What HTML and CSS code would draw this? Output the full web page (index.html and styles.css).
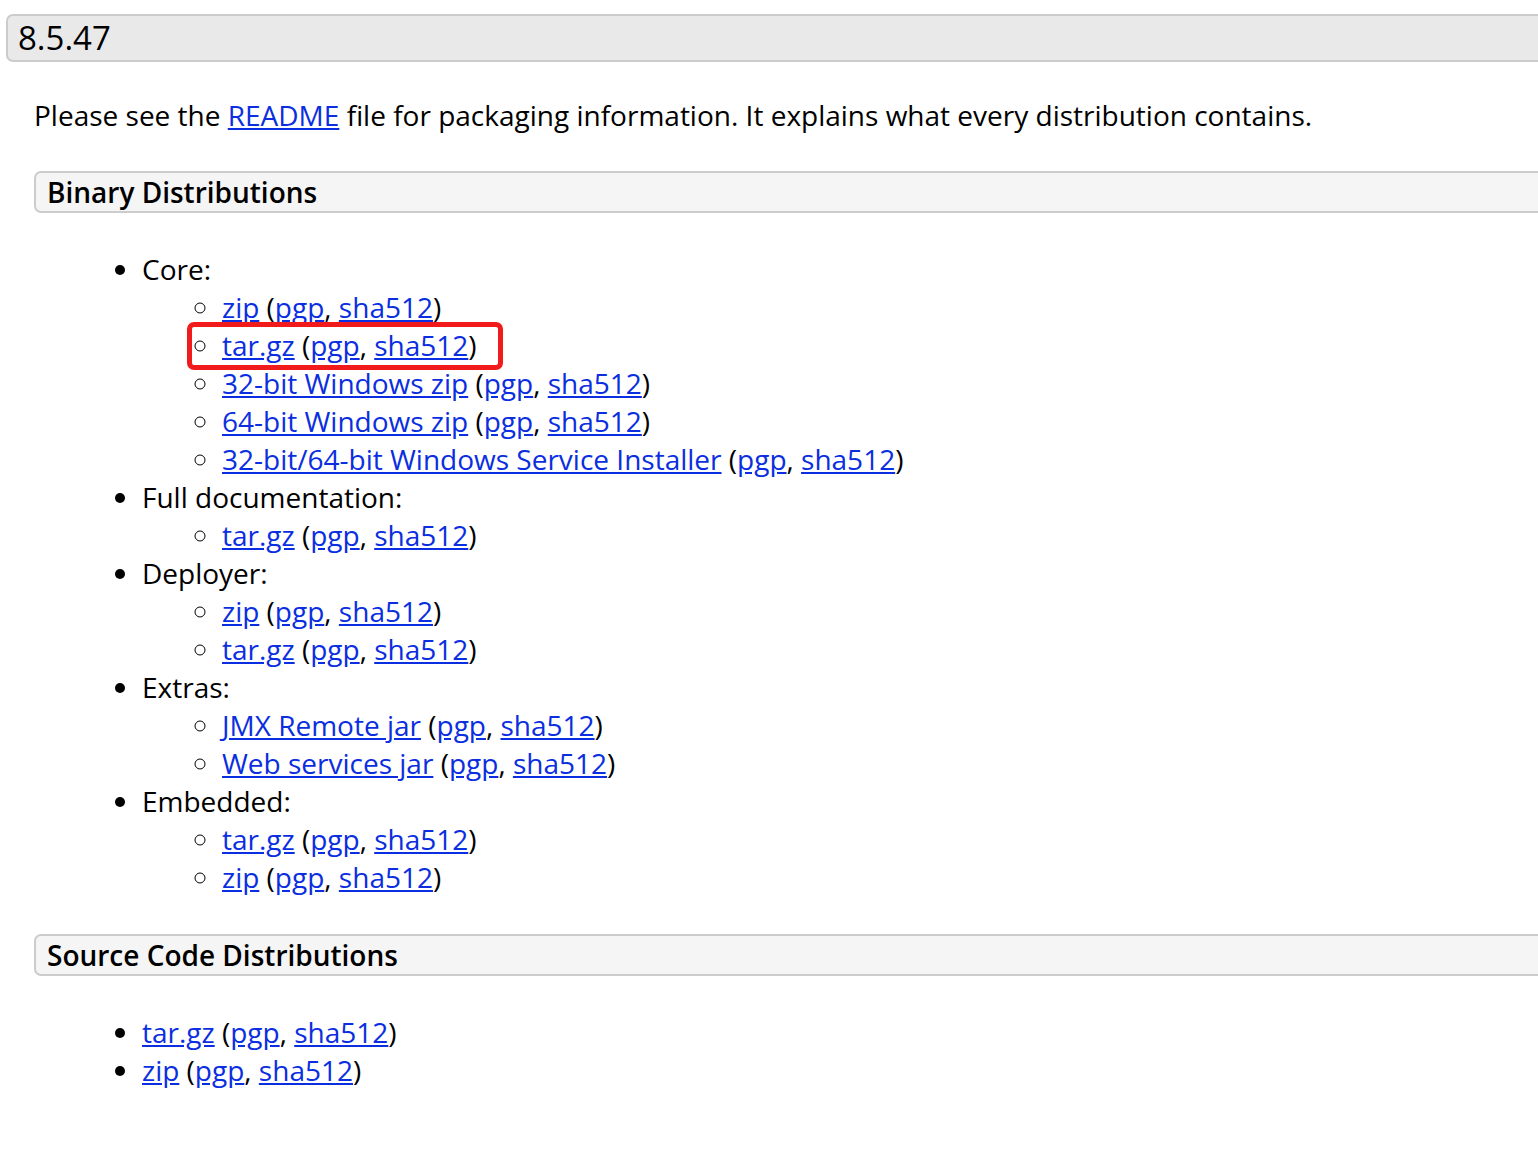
FILE: index.html
```html
<!DOCTYPE html>
<html lang="en">
<head>
<meta charset="utf-8">
<title>Tomcat 8.5.47</title>
<link rel="stylesheet" href="styles.css">
</head>
<body>
<h2 class="version">8.5.47</h2>
<div class="section">
  <p class="intro">Please see the <a href="#">README</a> file for packaging information. It explains what every distribution contains.</p>

  <h3 class="sub">Binary Distributions</h3>
  <ul class="dist">
    <li>Core:
      <ul class="files">
        <li><a href="#">zip</a> (<a href="#">pgp</a>, <a href="#">sha512</a>)</li>
        <li class="marked"><span class="mark"></span><a href="#">tar.gz</a> (<a href="#">pgp</a>, <a href="#">sha512</a>)</li>
        <li><a href="#">32-bit Windows zip</a> (<a href="#">pgp</a>, <a href="#">sha512</a>)</li>
        <li><a href="#">64-bit Windows zip</a> (<a href="#">pgp</a>, <a href="#">sha512</a>)</li>
        <li><a href="#">32-bit/64-bit Windows Service Installer</a> (<a href="#">pgp</a>, <a href="#">sha512</a>)</li>
      </ul>
    </li>
    <li>Full documentation:
      <ul class="files">
        <li><a href="#">tar.gz</a> (<a href="#">pgp</a>, <a href="#">sha512</a>)</li>
      </ul>
    </li>
    <li>Deployer:
      <ul class="files">
        <li><a href="#">zip</a> (<a href="#">pgp</a>, <a href="#">sha512</a>)</li>
        <li><a href="#">tar.gz</a> (<a href="#">pgp</a>, <a href="#">sha512</a>)</li>
      </ul>
    </li>
    <li>Extras:
      <ul class="files">
        <li><a href="#">JMX Remote jar</a> (<a href="#">pgp</a>, <a href="#">sha512</a>)</li>
        <li><a href="#">Web services jar</a> (<a href="#">pgp</a>, <a href="#">sha512</a>)</li>
      </ul>
    </li>
    <li>Embedded:
      <ul class="files">
        <li><a href="#">tar.gz</a> (<a href="#">pgp</a>, <a href="#">sha512</a>)</li>
        <li><a href="#">zip</a> (<a href="#">pgp</a>, <a href="#">sha512</a>)</li>
      </ul>
    </li>
  </ul>

  <h3 class="sub">Source Code Distributions</h3>
  <ul class="dist source">
    <li><a href="#">tar.gz</a> (<a href="#">pgp</a>, <a href="#">sha512</a>)</li>
    <li><a href="#">zip</a> (<a href="#">pgp</a>, <a href="#">sha512</a>)</li>
  </ul>
</div>
</body>
</html>
```

FILE: styles.css
```css
html {
  overflow: hidden;
}

body {
  margin: 0;
  padding-top: 14px;
  background: #fff;
  color: #000;
  font-family: "Open Sans", "Noto Sans", "DejaVu Sans", sans-serif;
  font-size: 28px;
  line-height: 38px;
}

a {
  color: #0a2ee0;
  text-decoration: underline;
}

.version {
  margin: 0 -40px 0 6px;
  padding: 0 0 0 10px;
  border: 2px solid #cccccc;
  border-radius: 7px;
  background: #e9e9e9;
  font-size: 33px;
  font-weight: normal;
  line-height: 44px;
}

.section {
  margin-left: 34px;
}

.intro {
  margin: 34px 0 37px 0;
}

.sub {
  margin: 0 -40px 0 0;
  padding: 0 0 0 11px;
  border: 2px solid #cccccc;
  border-radius: 7px;
  background: #f5f5f5;
  font-size: 28px;
  font-weight: 600;
  line-height: 38px;
}

.dist {
  margin: 37px 0 38px;
  padding-left: 108px;
  list-style: disc;
}

.dist.source {
  margin-top: 37px;
}

.files {
  margin: 0;
  padding-left: 80px;
  list-style: circle;
}

.marked {
  position: relative;
}

.mark {
  position: absolute;
  left: -35px;
  top: -4px;
  width: 316px;
  height: 48px;
  box-sizing: border-box;
  border: 5px solid #f21b1b;
  border-radius: 7px;
  pointer-events: none;
}
```
